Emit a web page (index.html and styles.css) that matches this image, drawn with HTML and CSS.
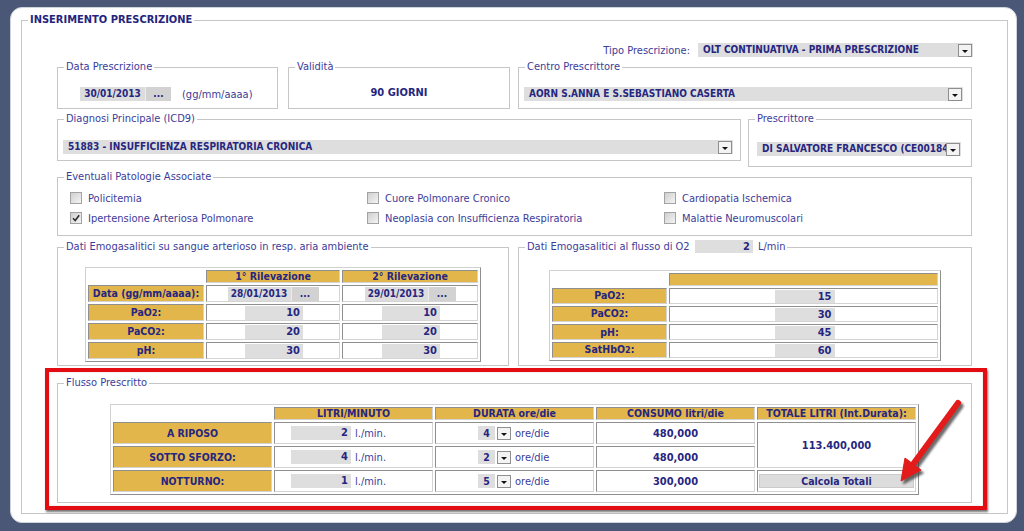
FILE: index.html
```html
<!DOCTYPE html>
<html lang="it">
<head>
<meta charset="utf-8">
<title>Inserimento Prescrizione</title>
<link rel="stylesheet" href="styles.css">
</head>
<body>
<div class="screen">
  <fieldset class="main">
    <legend class="main-legend">INSERIMENTO PRESCRIZIONE</legend>
    <div class="main-body">

      <div class="tipo-row">
        <span class="lbl">Tipo Prescrizione:</span>
        <div class="sel sel-tipo">
          <span class="sel-val">OLT CONTINUATIVA - PRIMA PRESCRIZIONE</span>
          <svg class="arr" viewBox="0 0 14 13"><rect x="0.5" y="0.5" width="13" height="12" fill="#f3f3f3" stroke="#8e8e8e"/><path d="M4 6h6l-3 3z" fill="#111"/></svg>
        </div>
      </div>

      <div class="row row-top">
        <fieldset class="box box-data">
          <legend>Data Prescrizione</legend>
          <div class="fs-body body-data">
            <span class="date"><span class="date-val">30/01/2013</span><span class="date-btn">...</span></span>
            <span class="hint">(gg/mm/aaaa)</span>
          </div>
        </fieldset>
        <fieldset class="box box-val">
          <legend>Validità</legend>
          <div class="fs-body body-val"><b class="strong">90 GIORNI</b></div>
        </fieldset>
        <fieldset class="box box-centro">
          <legend>Centro Prescrittore</legend>
          <div class="fs-body body-centro">
            <div class="sel">
              <span class="sel-val">AORN S.ANNA E S.SEBASTIANO CASERTA</span>
              <svg class="arr" viewBox="0 0 14 13"><rect x="0.5" y="0.5" width="13" height="12" fill="#f3f3f3" stroke="#8e8e8e"/><path d="M4 6h6l-3 3z" fill="#111"/></svg>
            </div>
          </div>
        </fieldset>
      </div>

      <div class="row row-mid">
        <fieldset class="box box-diag">
          <legend>Diagnosi Principale (ICD9)</legend>
          <div class="fs-body body-diag">
            <div class="sel">
              <span class="sel-val">51883 - INSUFFICIENZA RESPIRATORIA CRONICA</span>
              <svg class="arr" viewBox="0 0 14 13"><rect x="0.5" y="0.5" width="13" height="12" fill="#f3f3f3" stroke="#8e8e8e"/><path d="M4 6h6l-3 3z" fill="#111"/></svg>
            </div>
          </div>
        </fieldset>
        <fieldset class="box box-presc">
          <legend>Prescrittore</legend>
          <div class="fs-body body-presc">
            <div class="sel">
              <span class="sel-val">DI SALVATORE FRANCESCO (CE00184)</span>
              <svg class="arr" viewBox="0 0 14 13"><rect x="0.5" y="0.5" width="13" height="12" fill="#f3f3f3" stroke="#8e8e8e"/><path d="M4 6h6l-3 3z" fill="#111"/></svg>
            </div>
          </div>
        </fieldset>
      </div>

      <fieldset class="box box-pat">
        <legend>Eventuali Patologie Associate</legend>
        <div class="fs-body body-pat">
          <label class="chk"><span class="cb"></span>Policitemia</label>
          <label class="chk"><span class="cb"></span>Cuore Polmonare Cronico</label>
          <label class="chk"><span class="cb"></span>Cardiopatia Ischemica</label>
          <label class="chk"><span class="cb checked"><svg viewBox="0 0 10 10"><path d="M2 5.2l2.2 2.3L8.2 2.2" fill="none" stroke="#2a2a2a" stroke-width="1.5"/></svg></span>Ipertensione Arteriosa Polmonare</label>
          <label class="chk"><span class="cb"></span>Neoplasia con Insufficienza Respiratoria</label>
          <label class="chk"><span class="cb"></span>Malattie Neuromuscolari</label>
        </div>
      </fieldset>

      <div class="row row-emo">
        <fieldset class="box box-emo1">
          <legend>Dati Emogasalitici su sangue arterioso in resp. aria ambiente</legend>
          <div class="fs-body body-emo1">
            <table class="grid emo1">
              <colgroup><col class="w-lab1"><col class="w-c2"><col class="w-c3"></colgroup>
              <tr class="hdr"><td class="blank"></td><th>1° Rilevazione</th><th>2° Rilevazione</th></tr>
              <tr><th class="lab">Data (gg/mm/aaaa):</th>
                <td><span class="date"><span class="date-val">28/01/2013</span><span class="date-btn">...</span></span></td>
                <td><span class="date"><span class="date-val">29/01/2013</span><span class="date-btn">...</span></span></td></tr>
              <tr><th class="lab">PaO<small>2</small>:</th><td><span class="num">10</span></td><td><span class="num">10</span></td></tr>
              <tr><th class="lab">PaCO<small>2</small>:</th><td><span class="num">20</span></td><td><span class="num">20</span></td></tr>
              <tr><th class="lab">pH:</th><td><span class="num">30</span></td><td><span class="num">30</span></td></tr>
            </table>
          </div>
        </fieldset>
        <fieldset class="box box-emo2">
          <legend>Dati Emogasalitici al flusso di O2 <span class="num num-leg">2</span> L/min</legend>
          <div class="fs-body body-emo2">
            <table class="grid emo2">
              <colgroup><col class="w-lab2"><col class="w-v2"></colgroup>
              <tr class="hdr"><td class="blank"></td><th></th></tr>
              <tr><th class="lab">PaO<small>2</small>:</th><td><span class="num">15</span></td></tr>
              <tr><th class="lab">PaCO<small>2</small>:</th><td><span class="num">30</span></td></tr>
              <tr><th class="lab">pH:</th><td><span class="num">45</span></td></tr>
              <tr><th class="lab">SatHbO<small>2</small>:</th><td><span class="num">60</span></td></tr>
            </table>
          </div>
        </fieldset>
      </div>

      <div class="annot">
        <fieldset class="box box-flusso">
          <legend>Flusso Prescritto</legend>
          <div class="fs-body body-flusso">
            <table class="grid flusso">
              <colgroup><col class="w-f"><col class="w-f"><col class="w-f"><col class="w-f"><col class="w-f"></colgroup>
              <tr class="hdr"><td class="blank"></td><th>LITRI/MINUTO</th><th>DURATA ore/die</th><th>CONSUMO litri/die</th><th>TOTALE LITRI (Int.Durata):</th></tr>
              <tr><th class="lab">A RIPOSO</th>
                <td class="c-litri"><span class="num">2</span><span class="unit">l./min.</span></td>
                <td class="c-dur"><span class="mini-sel"><span class="mini-val">4</span><svg class="arr" viewBox="0 0 14 13"><rect x="0.5" y="0.5" width="13" height="12" fill="#f3f3f3" stroke="#8e8e8e"/><path d="M4 6h6l-3 3z" fill="#111"/></svg></span><span class="unit">ore/die</span></td>
                <td class="c-cons">480,000</td>
                <td class="c-tot" rowspan="2">113.400,000</td></tr>
              <tr><th class="lab">SOTTO SFORZO:</th>
                <td class="c-litri"><span class="num">4</span><span class="unit">l./min.</span></td>
                <td class="c-dur"><span class="mini-sel"><span class="mini-val">2</span><svg class="arr" viewBox="0 0 14 13"><rect x="0.5" y="0.5" width="13" height="12" fill="#f3f3f3" stroke="#8e8e8e"/><path d="M4 6h6l-3 3z" fill="#111"/></svg></span><span class="unit">ore/die</span></td>
                <td class="c-cons">480,000</td></tr>
              <tr><th class="lab">NOTTURNO:</th>
                <td class="c-litri"><span class="num">1</span><span class="unit">l./min.</span></td>
                <td class="c-dur"><span class="mini-sel"><span class="mini-val">5</span><svg class="arr" viewBox="0 0 14 13"><rect x="0.5" y="0.5" width="13" height="12" fill="#f3f3f3" stroke="#8e8e8e"/><path d="M4 6h6l-3 3z" fill="#111"/></svg></span><span class="unit">ore/die</span></td>
                <td class="c-cons">300,000</td>
                <td class="c-btn"><span class="btn">Calcola Totali</span></td></tr>
            </table>
          </div>
        </fieldset>
        <svg class="red-arrow" viewBox="0 0 72 92">
          <defs>
            <filter id="sh" x="-30%" y="-30%" width="160%" height="160%"><feGaussianBlur stdDeviation="1.2"/></filter>
          </defs>
          <g transform="translate(2.5,3)" fill="#3a3a3a" stroke="#3a3a3a" filter="url(#sh)" opacity="0.75">
            <line x1="62" y1="4" x2="18" y2="64" stroke-width="6" stroke-linecap="round"/>
            <polygon points="5,82 25,71 9,59"/>
          </g>
          <g fill="#e31b1b" stroke="#e31b1b">
            <line x1="62" y1="4" x2="18" y2="64" stroke-width="6" stroke-linecap="round"/>
            <polygon points="5,82 25,71 9,59" stroke-width="1" stroke-linejoin="round"/>
          </g>
        </svg>
      </div>

    </div>
  </fieldset>
</div>
</body>
</html>
```
FILE: styles.css
```css
* { box-sizing: border-box; }
html, body { margin: 0; padding: 0; }
body {
  background: #4b5776;
  font-family: "DejaVu Sans Condensed", "DejaVu Sans", sans-serif;
  font-size: 11px;
  color: #3c3c99;
  width: 1024px;
  height: 531px;
  overflow: hidden;
}

.screen {
  margin: 7px 0 0 10px;
  width: 1007px;
  height: 516px;
  background: #fff;
  border: 1px solid #cfd3dc;
  border-radius: 12px;
  padding: 5px 8px 0 10px;
}

.main {
  margin: 0;
  padding: 0;
  min-width: 0;
  border: 1px solid #c6c6c6;
  height: 501px;
}
.main-legend {
  font-size: 11px;
  font-weight: bold;
  line-height: 14px;
  color: #24247c;
  margin-left: 6px;
  padding: 0 2px;
}
.main-body { padding: 16px 35px 0 35px; }

.tipo-row {
  display: flex;
  justify-content: flex-end;
  align-items: center;
  gap: 8px;
  height: 14px;
  margin-right: -1px;
}
.sel-tipo { width: 275px; }

.sel {
  display: flex;
  align-items: center;
  height: 14px;
  background: #dedede;
}
.sel-val {
  flex: 1;
  min-width: 0;
  padding-left: 5px;
  font-size: 10px;
  font-weight: bold;
  color: #262680;
  white-space: nowrap;
  overflow: hidden;
  line-height: 14px;
}
.arr { width: 14px; height: 13px; flex: none; margin-right: 1px; display: block; }

.row { display: flex; align-items: flex-start; }
.row-top { margin-top: 3px; }
.row-mid { margin-top: 3px; }
.row-emo { margin-top: 4px; }

.box {
  margin: 0;
  padding: 0;
  min-width: 0;
  border: 1px solid #c6c6c6;
}
.box legend {
  font-size: 11px;
  line-height: 14px;
  margin-left: 6px;
  padding: 0 2px;
  color: #3c3c99;
  white-space: nowrap;
}

.box-data { width: 221px; height: 49px; margin-right: 10px; }
.box-val { width: 222px; height: 49px; margin-right: 8px; }
.box-centro { width: 454px; height: 49px; }
.body-data { padding: 13px 0 0 22px; display: flex; align-items: center; }
.body-val { padding-top: 12px; text-align: center; line-height: 14px; }
.body-centro { padding: 13px 8px 0 5px; }

.strong { font-weight: bold; color: #262680; }

.date { display: inline-flex; height: 14px; line-height: 14px; font-size: 10px; font-weight: bold; color: #262680; }
.date-val { width: 65px; background: #dcdcdc; text-align: center; }
.date-btn { width: 26px; background: #d2d2d2; border-left: 1px solid #ececec; text-align: center; }
.hint { margin-left: 11px; }

.box-diag { width: 684px; height: 49px; }
.box-presc { width: 224px; height: 55px; margin-left: 7px; }
.body-diag { padding: 14px 7px 0 5px; }
.body-presc { padding: 16px 10px 0 8px; }

.box-pat { margin-top: 3px; height: 66px; }
.body-pat {
  padding: 4px 0 0 12px;
  display: grid;
  grid-template-columns: repeat(3, 297px);
  grid-auto-rows: 20px;
}
.chk { display: flex; align-items: center; gap: 6px; }
.cb {
  width: 12px;
  height: 12px;
  border: 1px solid #a3a3a3;
  background: linear-gradient(135deg, #cfcfcf, #f4f4f4);
  display: flex;
  align-items: center;
  justify-content: center;
}
.cb svg { width: 10px; height: 10px; display: block; }

.box-emo1 { width: 452px; height: 126px; }
.box-emo2 { width: 454px; height: 126px; margin-left: 9px; }
.body-emo1 { padding-top: 13px; }
.body-emo2 { padding-top: 16px; }

.num-leg {
  display: inline-block;
  vertical-align: middle;
  width: 58px;
  height: 13px;
  line-height: 13px;
  margin: -2px 2px 0 2px;
}

.grid {
  table-layout: fixed;
  border-collapse: separate;
  border-spacing: 2px;
  border: 1px solid;
  border-color: #d2d2d2 #8f8f8f #8f8f8f #d2d2d2;
  margin: 0 auto;
  background: #fff;
}
.grid td, .grid th {
  border: 1px solid;
  border-color: #8f8f8f #d4d4d4 #d4d4d4 #8f8f8f;
  padding: 0;
  text-align: center;
  vertical-align: middle;
  font-weight: bold;
  color: #262680;
  font-size: 10.5px;
  line-height: 13px;
  white-space: nowrap;
  overflow: hidden;
}
.grid th { background: #e3b64c; }
.grid td.blank { border: none; background: transparent; }
.grid .hdr > * { line-height: 11px; height: 13px; }
.grid small { font-size: 9px; }

.num {
  display: inline-block;
  background: #dedede;
  text-align: right;
  font-size: 11px;
  font-weight: bold;
  color: #262680;
  padding-right: 3px;
  vertical-align: middle;
}

.emo1 { width: 396px; }
.w-lab1 { width: 116px; }
.w-c2 { width: 134px; }
.w-c3 { width: 136px; }
.emo1 tr + tr > * { height: 17px; }
.emo1 .num { width: 58px; height: 14px; line-height: 14px; margin-left: 2px; }
.emo1 .date { vertical-align: middle; }
.emo1 .date-val { width: 63px; }
.emo1 .date-btn { width: 28px; }

.emo2 { width: 392px; }
.w-lab2 { width: 115px; }
.w-v2 { width: 269px; }
.emo2 tr + tr > * { height: 16px; }
.emo2 .num { width: 60px; height: 13px; line-height: 13px; margin-left: 2px; }

.annot {
  position: relative;
  margin: 2px -15px 0 -12px;
  height: 142px;
  border: 4px solid #e30c12;
  box-shadow: 1px 2px 2px rgba(0, 0, 0, 0.55), inset 0 0 1px rgba(120, 0, 0, 0.6);
  padding: 4px 11px 0 8px;
}
.box-flusso { height: 127px; }
.body-flusso { padding-top: 14px; }

.flusso { width: 809px; }
.w-f { width: 159px; }
.flusso tr + tr > * { height: 22px; }
.grid .c-litri, .grid .c-dur { text-align: left; }
.grid .c-litri { padding-left: 16px; }
.grid .c-dur { padding-left: 42px; }
.flusso .num { width: 60px; height: 14px; line-height: 14px; }
.unit { font-size: 11px; font-weight: normal; color: #3c3c99; margin-left: 4px; vertical-align: middle; }
.mini-sel {
  display: inline-flex;
  align-items: center;
  vertical-align: middle;
  height: 14px;
}
.mini-val {
  width: 17px;
  height: 14px;
  line-height: 14px;
  background: #dedede;
  text-align: center;
  margin-right: 2px;
}
.c-dur .unit { margin-left: 3px; }
.grid .c-cons, .grid .c-tot { font-size: 11px; }
.grid .c-btn { padding: 0 1px; }
.btn {
  display: block;
  height: 14px;
  line-height: 12px;
  background: #dcdcdc;
  border: 1px solid #cbcbcb;
  font-weight: bold;
  color: #262680;
}

.red-arrow {
  position: absolute;
  left: 847px;
  top: 27px;
  width: 72px;
  height: 92px;
}
```
